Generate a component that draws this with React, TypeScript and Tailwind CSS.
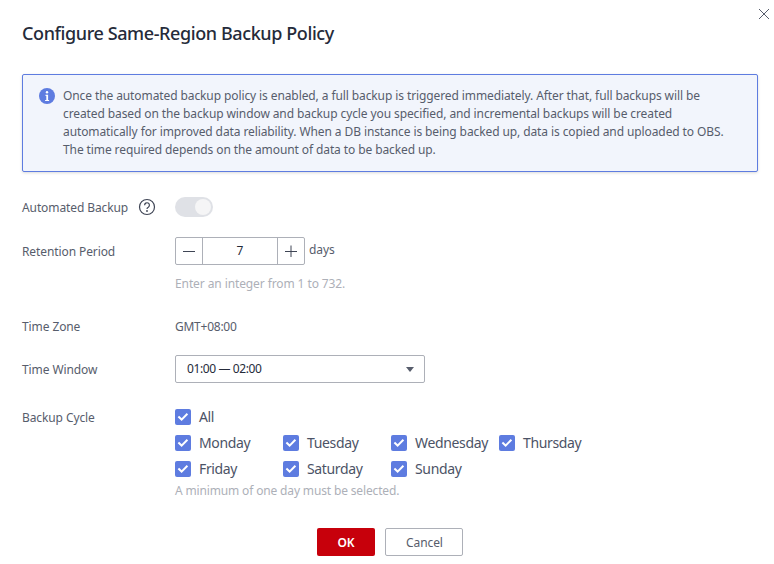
const DAYS = ['Monday', 'Tuesday', 'Wednesday', 'Thursday', 'Friday', 'Saturday', 'Sunday'];

function Check({ label }: { label: string }) {
  return (
    <label className="flex h-[16px] items-center gap-[8px] text-[14px] leading-[16px] tracking-[-0.35px] text-[#4c5366]">
      <span className="flex h-[16px] w-[16px] items-center justify-center rounded-[2px] bg-[#5e7ce0]">
        <svg width="16" height="16" viewBox="0 0 16 16" fill="none">
          <path d="M3.4 7.6l3.2 3 5.8-5.8" stroke="#fff" strokeWidth="2" />
        </svg>
      </span>
      {label}
    </label>
  );
}

export default function App() {
  return (
    <div className="relative h-[564px] w-[774px] overflow-hidden bg-white px-[22px] font-['Noto_Sans','Open_Sans',sans-serif] text-[12px] tracking-[-0.1px] text-[#575d6c]">
      <button className="absolute right-[4px] top-[8px] text-[#575d6c]">
        <svg width="12" height="12" viewBox="0 0 12 12" fill="none" stroke="currentColor" strokeWidth="1">
          <path d="M1 1l10 10M11 1L1 11" />
        </svg>
      </button>

      <h1 className="pt-[21px] text-[18px] font-medium leading-[24px] tracking-[-0.4px] text-[#252b3a]">
        Configure Same-Region Backup Policy
      </h1>

      <div className="mt-[29px] flex h-[98px] w-[736px] gap-[8px] rounded-[2px] border border-[#5e7ce0] bg-[#f2f5fc] pl-[16px] pr-[12px] pt-[12px] leading-[18px] shadow-[0_1px_3px_rgba(0,0,0,0.15)]">
        <svg className="mt-[1px] shrink-0" width="16" height="16" viewBox="0 0 16 16">
          <circle cx="8" cy="8" r="8" fill="#5e7ce0" />
          <circle cx="8" cy="4.3" r="1.2" fill="#fff" />
          <path d="M6.5 6.8h2.6v5.1h1v1.1H6.1v-1.1h1.2V7.9H6.5z" fill="#fff" />
        </svg>
        <p className="whitespace-nowrap">
          Once the automated backup policy is enabled, a full backup is triggered immediately. After that, full backups will be
          <br />
          created based on the backup window and backup cycle you specified, and incremental backups will be created
          <br />
          automatically for improved data reliability. When a DB instance is being backed up, data is copied and uploaded to OBS.
          <br />
          The time required depends on the amount of data to be backed up.
        </p>
      </div>

      <div className="mt-[25px] flex h-[20px] items-center">
        <div className="flex w-[153px] items-center pt-[1px]">
          <span>Automated Backup</span>
          <svg className="ml-[10px] -mt-[1px]" width="18" height="18" viewBox="0 0 18 18" fill="none">
            <circle cx="9" cy="9" r="7.5" stroke="#3f4555" strokeWidth="1.2" />
            <path d="M6.6 7.2a2.4 2.4 0 1 1 3.7 2c-.9.5-1.3.9-1.3 1.8" stroke="#3f4555" strokeWidth="1.2" />
            <circle cx="9" cy="13" r=".9" fill="#3f4555" />
          </svg>
        </div>
        <div className="flex h-[20px] w-[38px] items-center justify-end rounded-full bg-[#dfe1e6] pr-[2px]">
          <span className="h-[16px] w-[16px] rounded-full bg-[#f5f5f6]" />
        </div>
      </div>

      <div className="mt-[20px] flex items-center">
        <div className="w-[153px] pt-[1px]">Retention Period</div>
        <div className="flex h-[28px] w-[130px] items-stretch rounded-[2px] border border-[#adb0b8] text-[#252b3a]">
          <span className="flex w-[27px] items-center justify-center border-r border-[#adb0b8]">
            <svg width="12" height="12" viewBox="0 0 12 12" stroke="#3f4555"><path d="M0 6.5h12" /></svg>
          </span>
          <span className="flex flex-1 items-center justify-center">7</span>
          <span className="flex w-[27px] items-center justify-center border-l border-[#adb0b8]">
            <svg width="12" height="12" viewBox="0 0 12 12" stroke="#3f4555"><path d="M0 6.5h12M6 .5v12" /></svg>
          </span>
        </div>
        <span className="ml-[4px] -mt-[3px]">days</span>
      </div>
      <p className="ml-[153px] mt-[10px] leading-[18px] text-[#adb0b8]">Enter an integer from 1 to 732.</p>

      <div className="mt-[25px] flex h-[18px] items-center">
        <div className="w-[153px]">Time Zone</div>
        <span className="tracking-[-0.25px] text-[#575d6c]">GMT+08:00</span>
      </div>

      <div className="mt-[19px] flex items-center">
        <div className="w-[153px] pt-[1px]">Time Window</div>
        <div className="flex h-[28px] w-[250px] items-center justify-between rounded-[2px] border border-[#adb0b8] pl-[11px] pr-[10px] text-[#252b3a]">
          <span className="tracking-[-0.4px]">01:00 — 02:00</span>
          <svg width="8" height="5" viewBox="0 0 8 5"><path d="M0 0h8L4 5z" fill="#575d6c" /></svg>
        </div>
      </div>

      <div className="mt-[26px] flex">
        <div className="w-[153px] pt-[1px] leading-[16px]">Backup Cycle</div>
        <div>
          <Check label="All" />
          <div className="mt-[10px] grid grid-cols-[108px_108px_108px_108px] gap-y-[10px]">
            {DAYS.map((day) => (
              <Check key={day} label={day} />
            ))}
          </div>
          <p className="mt-[6px] leading-[16px] tracking-[-0.15px] text-[#adb0b8]">A minimum of one day must be selected.</p>
        </div>
      </div>

      <div className="mt-[29px] flex justify-center gap-[10px] pl-[6px]">
        <button className="h-[28px] w-[58px] rounded-[2px] bg-[#c7000b] pt-[1px] font-semibold text-white">OK</button>
        <button className="h-[28px] w-[78px] rounded-[2px] border border-[#adb0b8] bg-white pl-[1px] pt-[1px] text-[#575d6c]">Cancel</button>
      </div>
    </div>
  );
}
